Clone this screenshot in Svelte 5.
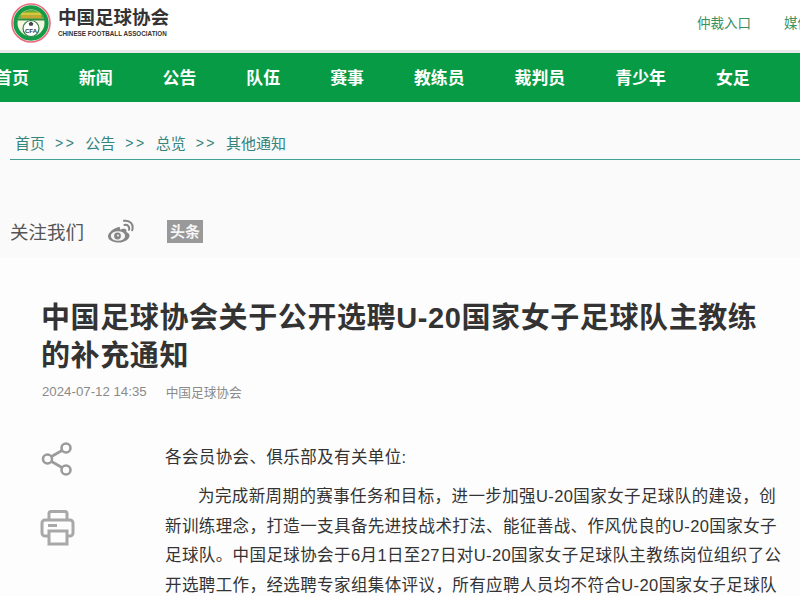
<script>
  const nav = ["首页", "新闻", "公告", "队伍", "赛事", "教练员", "裁判员", "青少年", "女足"];
  const crumbs = ["首页", "公告", "总览", "其他通知"];
</script>

<div class="page">
  <header>
    <div class="brand">
      <svg class="logo" viewBox="0 0 40 40" width="40" height="40">
        <circle cx="20" cy="20" r="19" fill="#fff" stroke="#ec6a7d" stroke-width="1.600" />
        <circle cx="20" cy="20" r="15.600" fill="#f4f6df" stroke="#159a48" stroke-width="4.200" />
        <path d="M7 15.500a14 14 0 0 1 26 0z" fill="#5fae3e" />
        <path d="M11 9.500h18l1.600 3H9.400z" fill="#d8c63c" />
        <path d="M10 12.500h20v3H10z" fill="#c9a52f" />
        <path d="M7 15.500h26v2H7z" fill="#2f8d3c" />
        <circle cx="20" cy="25.500" r="8" fill="#fff" stroke="#2e7d45" stroke-width="1.200" />
        <path d="M20 18.500l2.400 2-.9 2.300h-3l-.9-2.300z" fill="#444" />
        <text x="20" y="30" class="cfa">CFA</text>
      </svg>
      <div class="wordmark">
        <strong>中国足球协会</strong>
        <span>CHINESE FOOTBALL ASSOCIATION</span>
      </div>
    </div>
    <div class="links">
      <a href="#top">仲裁入口</a>
      <a href="#top">媒体入口</a>
    </div>
  </header>

  <nav>
    {#each nav as item}
      <a href="#top">{item}</a>
    {/each}
  </nav>

  <div class="crumbs">
    {#each crumbs as c, i}
      {#if i > 0}<span class="sep">&gt;&gt;</span>{/if}
      <a href="#top">{c}</a>
    {/each}
  </div>

  <div class="follow">
    <span>关注我们</span>
    <svg class="weibo" viewBox="0 0 28 24" width="28" height="24">
      <path d="M11.500 8C6.500 9.500 1 13.500 1 17.500c0 3.500 5 6 10.500 6 6 0 11-3.200 11-6.800 0-2.200-2-3.200-3.300-3.600.7-1.800.4-3.100-1.600-3.400-1.500-.2-3.500.5-4.500 1 .3-2.200-.2-3.100-1.600-2.700z" fill="#858585" />
      <ellipse cx="11" cy="17" rx="7.200" ry="4.800" fill="#f6f6f6" />
      <circle cx="10.500" cy="17" r="3.400" fill="#858585" />
      <circle cx="11" cy="16.500" r="1" fill="#f6f6f6" />
      <path d="M17.500 6c3-.8 5.500 1.700 4.500 4.800M17 1.800c6-1 10 3.600 8.200 9.500" fill="none" stroke="#858585" stroke-width="2" stroke-linecap="round" />
    </svg>
    <span class="toutiao">头条</span>
  </div>

  <main>
    <h1>中国足球协会关于公开选聘U-20国家女子足球队主教练的补充通知</h1>
    <div class="meta">
      <span class="date">2024-07-12 14:35</span>
      <span>中国足球协会</span>
    </div>
    <div class="body">
      <aside>
        <svg viewBox="0 0 36 36" width="36" height="36" fill="none" stroke="#9b9b9b" stroke-width="2.600">
          <circle cx="26" cy="7" r="4.500" />
          <circle cx="7.500" cy="18" r="4.500" />
          <circle cx="26" cy="29" r="4.500" />
          <path d="M11.500 15.500L22 9.500M11.500 20.500L22 26.500" />
        </svg>
        <svg viewBox="0 0 36 36" width="36" height="36" fill="none" stroke="#a8a8a8" stroke-width="3">
          <path d="M9 10V3.500a2 2 0 0 1 2-2h14a2 2 0 0 1 2 2V10" />
          <path d="M9 26H5a3 3 0 0 1-3-3V13a3 3 0 0 1 3-3h25a3 3 0 0 1 3 3v10a3 3 0 0 1-3 3h-3" />
          <path d="M9 21h18v13H9z" />
          <path d="M8 15.500h9" />
        </svg>
      </aside>
      <article>
        <p class="salute">各会员协会、俱乐部及有关单位:</p>
        <p class="text">为完成新周期的赛事任务和目标，进一步加强U-20国家女子足球队的建设，创新训练理念，打造一支具备先进技战术打法、能征善战、作风优良的U-20国家女子足球队。中国足球协会于6月1日至27日对U-20国家女子足球队主教练岗位组织了公开选聘工作，经选聘专家组集体评议，所有应聘人员均不符合U-20国家女子足球队</p>
      </article>
    </div>
  </main>
</div>

<style>
  :global(body) {
    margin: 0;
    overflow: hidden;
    background: #fafafa;
  }

  .page {
    width: 800px;
    height: 596px;
    overflow: hidden;
    font-family: "Liberation Sans", "Noto Sans CJK SC", sans-serif;
  }

  header {
    height: 50px;
    display: flex;
    justify-content: space-between;
    background: #fff;
    border-bottom: 3px solid #e8e8ea;
  }

  .brand {
    display: flex;
    align-items: flex-start;
    gap: 7px;
    padding: 3px 0 0 11px;
  }

  .logo {
    display: block;
  }

  .cfa {
    font-size: 6px;
    font-weight: 700;
    text-anchor: middle;
    fill: #333;
  }

  .wordmark {
    display: flex;
    flex-direction: column;
    gap: 2px;
    padding-top: 5px;
    color: #333;
  }

  .wordmark strong {
    font-size: 18.500px;
    line-height: 20px;
  }

  .wordmark span {
    font-size: 6.300px;
    line-height: 7px;
    font-weight: 700;
    white-space: nowrap;
  }

  .links {
    display: flex;
    gap: 33px;
    padding-top: 15px;
    margin-right: -38px;
    font-size: 13.500px;
    line-height: 18px;
  }

  .links a {
    color: #3a9160;
    text-decoration: none;
  }

  nav {
    height: 47px;
    padding-bottom: 2px;
    display: flex;
    align-items: center;
    gap: 50px;
    margin-left: -5px;
    background: #079b45;
  }

  nav a {
    color: #fff;
    font-size: 16.900px;
    font-weight: 700;
    text-decoration: none;
    flex: none;
  }

  .crumbs {
    margin: 29px 0 0 10px;
    padding: 0 0 5px 5px;
    height: 23px;
    display: flex;
    align-items: center;
    gap: 10px;
    color: #33857d;
    font-size: 15px;
    border-bottom: 1px solid #42a093;
  }

  .crumbs a {
    color: inherit;
    text-decoration: none;
  }

  .sep {
    width: 20.300px;
    font-size: 14px;
    letter-spacing: 2.500px;
    white-space: nowrap;
  }

  .follow {
    display: flex;
    align-items: center;
    height: 30px;
    margin-top: 56px;
    padding-left: 10px;
    color: #555;
    font-size: 18.500px;
  }

  .weibo {
    margin-left: 23px;
  }

  .toutiao {
    margin-left: 32px;
    width: 36px;
    height: 23px;
    line-height: 23px;
    text-align: center;
    background: #999;
    color: #f5f5f5;
    font-size: 15px;
    font-weight: 700;
  }

  main {
    margin-top: 12px;
    padding-top: 41px;
    background: #fdfdfd;
  }

  h1 {
    margin: 0;
    padding: 0 30px 0 41px;
    color: #333;
    font-size: 29px;
    letter-spacing: 0.600px;
    line-height: 38px;
    font-weight: 700;
  }

  .meta {
    display: flex;
    align-items: center;
    gap: 19px;
    margin-top: 8px;
    height: 17px;
    padding-left: 42px;
    color: #8b8b8b;
    font-size: 12.700px;
  }

  .date {
    font-size: 13.250px;
  }

  .body {
    display: flex;
    margin-top: 43px;
  }

  aside {
    width: 165px;
    margin-top: -2px;
    padding-left: 40px;
    box-sizing: border-box;
    display: flex;
    flex-direction: column;
    gap: 33px;
    flex: none;
  }

  article {
    width: 620px;
    color: #333;
    font-size: 16.500px;
    letter-spacing: 0.400px;
    line-height: 29.500px;
  }

  article p {
    margin: 0;
  }

  .salute {
    margin-bottom: 9.500px !important;
  }

  .text {
    text-indent: 2em;
  }
</style>
